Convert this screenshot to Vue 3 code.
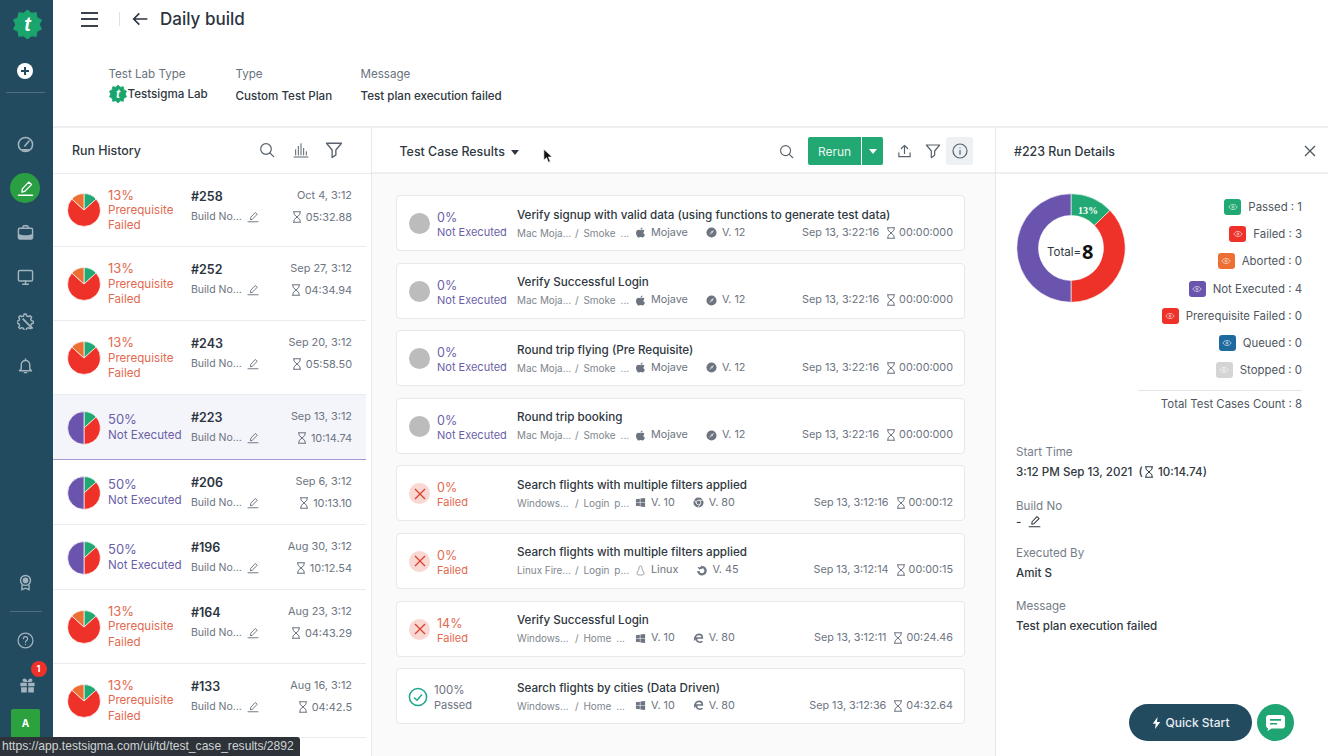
<script setup>
import { computed } from 'vue'

const GREEN = '#22a872'
const RED = '#ee3229'
const ORANGE = '#ee6f33'
const PURPLE = '#6a54ad'

// pie wedge as svg path, angles in degrees from 12 o'clock
function wedge(cx, cy, r, from, to) {
  const pt = (a) => {
    const t = (a - 90) * Math.PI / 180
    return (cx + r * Math.cos(t)).toFixed(2) + ' ' + (cy + r * Math.sin(t)).toFixed(2)
  }
  const large = to - from > 180 ? 1 : 0
  return `M${cx} ${cy}L${pt(from)}A${r} ${r} 0 ${large} 1 ${pt(to)}Z`
}

// same thing with a hole, for the donut
function ring(cx, cy, R, r, from, to) {
  const pt = (a, rad) => {
    const t = (a - 90) * Math.PI / 180
    return (cx + rad * Math.cos(t)).toFixed(2) + ' ' + (cy + rad * Math.sin(t)).toFixed(2)
  }
  const large = to - from > 180 ? 1 : 0
  return `M${pt(from, R)}A${R} ${R} 0 ${large} 1 ${pt(to, R)}L${pt(to, r)}A${r} ${r} 0 ${large} 0 ${pt(from, r)}Z`
}

const logoPoints = computed(() => {
  const pts = []
  for (let i = 0; i < 20; i++) {
    const a = (i * 18 - 90) * Math.PI / 180
    const rad = i % 2 ? 9.6 : 12
    pts.push((12 + rad * Math.cos(a)).toFixed(2) + ',' + (12 + rad * Math.sin(a)).toFixed(2))
  }
  return pts.join(' ')
})

const pies = {
  pre: [
    { d: wedge(17, 17, 16.4, 0, 48), c: GREEN },
    { d: wedge(17, 17, 16.4, 48, 312), c: RED },
    { d: wedge(17, 17, 16.4, 312, 360), c: ORANGE }
  ],
  not: [
    { d: wedge(17, 17, 16.4, 0, 48), c: GREEN },
    { d: wedge(17, 17, 16.4, 48, 180), c: RED },
    { d: wedge(17, 17, 16.4, 180, 360), c: PURPLE }
  ]
}

const runs = [
  { id: '#258', date: 'Oct 4, 3:12', dur: '05:32.88', kind: 'pre' },
  { id: '#252', date: 'Sep 27, 3:12', dur: '04:34.94', kind: 'pre' },
  { id: '#243', date: 'Sep 20, 3:12', dur: '05:58.50', kind: 'pre' },
  { id: '#223', date: 'Sep 13, 3:12', dur: '10:14.74', kind: 'not', active: true },
  { id: '#206', date: 'Sep 6, 3:12', dur: '10:13.10', kind: 'not' },
  { id: '#196', date: 'Aug 30, 3:12', dur: '10:12.54', kind: 'not' },
  { id: '#164', date: 'Aug 23, 3:12', dur: '04:43.29', kind: 'pre' },
  { id: '#133', date: 'Aug 16, 3:12', dur: '04:42.5', kind: 'pre' }
]

const mac = { env: 'Mac Moja...', suite: '/ Smoke ...', os: 'apple', osName: 'Mojave', br: 'safari', brName: 'V. 12', time: 'Sep 13, 3:22:16', dur: '00:00:000', state: 'none', pct: '0%', label: 'Not Executed' }

const cases = [
  { ...mac, title: 'Verify signup with valid data (using functions to generate test data)' },
  { ...mac, title: 'Verify Successful Login' },
  { ...mac, title: 'Round trip flying (Pre Requisite)' },
  { ...mac, title: 'Round trip booking' },
  { title: 'Search flights with multiple filters applied', env: 'Windows...', suite: '/ Login p...', os: 'windows', osName: 'V. 10', br: 'chrome', brName: 'V. 80', time: 'Sep 13, 3:12:16', dur: '00:00:12', state: 'fail', pct: '0%', label: 'Failed' },
  { title: 'Search flights with multiple filters applied', env: 'Linux Fire...', suite: '/ Login p...', os: 'linux', osName: 'Linux', br: 'firefox', brName: 'V. 45', time: 'Sep 13, 3:12:14', dur: '00:00:15', state: 'fail', pct: '0%', label: 'Failed' },
  { title: 'Verify Successful Login', env: 'Windows...', suite: '/ Home ...', os: 'windows', osName: 'V. 10', br: 'edge', brName: 'V. 80', time: 'Sep 13, 3:12:11', dur: '00:24.46', state: 'fail', pct: '14%', label: 'Failed' },
  { title: 'Search flights by cities (Data Driven)', env: 'Windows...', suite: '/ Home ...', os: 'windows', osName: 'V. 10', br: 'edge', brName: 'V. 80', time: 'Sep 13, 3:12:36', dur: '04:32.64', state: 'pass', pct: '100%', label: 'Passed' }
]

const legend = [
  { label: 'Passed : 1', c: GREEN },
  { label: 'Failed : 3', c: RED },
  { label: 'Aborted : 0', c: ORANGE },
  { label: 'Not Executed : 4', c: PURPLE },
  { label: 'Prerequisite Failed : 0', c: RED },
  { label: 'Queued : 0', c: '#1e6a9e' },
  { label: 'Stopped : 0', c: '#d4d4d4' }
]

const donut = [
  { d: ring(55, 55, 54.2, 32.5, 0, 46), c: GREEN },
  { d: ring(55, 55, 54.2, 32.5, 46, 180), c: RED },
  { d: ring(55, 55, 54.2, 32.5, 180, 360), c: PURPLE }
]

const railTop = ['dial', 'pencil', 'case', 'monitor', 'gear', 'bell']
</script>

<template>
  <div class="app">
    <svg class="sprite" aria-hidden="true">
      <symbol id="dial" viewBox="0 0 24 24"><g fill="none" stroke="currentColor" stroke-width="2.200"><circle cx="12" cy="12" r="10"/><path d="M11 14l6-7" stroke-linecap="round"/></g><path fill="currentColor" d="M5 18.500h14a10 10 0 0 1-14 0z"/></symbol>
      <symbol id="pencil" viewBox="0 0 24 24"><g fill="none" stroke="currentColor" stroke-width="1.900" stroke-linejoin="round" stroke-linecap="round"><path d="M7 17l.5-4.500L16.500 3l4 3.500L11 16z"/><path d="M2 21.500h20"/></g></symbol>
      <symbol id="case" viewBox="0 0 24 24"><g fill="none" stroke="currentColor" stroke-width="2"><path d="M8.500 6V4a1.500 1.500 0 0 1 1.500-1.500h4A1.500 1.500 0 0 1 15.500 4v2"/><rect x="2" y="6" width="20" height="15" rx="2"/></g><path fill="currentColor" d="M2 14c6 2.500 14 2.500 20 0v6a2 2 0 0 1-2 2H4a2 2 0 0 1-2-2z"/></symbol>
      <symbol id="monitor" viewBox="0 0 24 24"><g fill="none" stroke="currentColor" stroke-width="2" stroke-linecap="round"><rect x="2" y="2" width="20" height="15" rx="2"/><path d="M12 17v4M8 21.500h8"/></g></symbol>
      <symbol id="gear" viewBox="0 0 24 24"><path fill="none" stroke="currentColor" stroke-width="2" stroke-linejoin="round" d="M10 1.500h3l.7 2.700 2.500 1 2.400-1.400 2.100 2.100-1.400 2.400 1 2.500 2.700.7v3l-2.700.7-1 2.500 1.400 2.400-2.100 2.100-2.400-1.400-2.500 1-.7 2.700h-3l-.7-2.700-2.500-1-2.400 1.400-2.100-2.100 1.400-2.400-1-2.500-2.700-.7v-3l2.700-.7 1-2.500-1.400-2.400 2.100-2.100 2.400 1.400 2.500-1z"/><path fill="none" stroke="currentColor" stroke-width="2.600" d="M8 8l14 14"/></symbol>
      <symbol id="bell" viewBox="0 0 24 24"><g fill="none" stroke="currentColor" stroke-width="2" stroke-linejoin="round"><path d="M6 17v-6a6 6 0 0 1 12 0v6l2.500 2.500h-17z"/><path d="M9.500 22h5M12 5V2"/></g></symbol>
      <symbol id="badge" viewBox="0 0 24 24"><g fill="none" stroke="currentColor" stroke-width="2"><circle cx="12" cy="9" r="7"/><circle cx="12" cy="9" r="3" fill="currentColor"/><path d="M7 15v7l5-2 5 2v-7"/></g></symbol>
      <symbol id="help" viewBox="0 0 24 24"><g fill="none" stroke="currentColor" stroke-width="1.700" stroke-linecap="round"><circle cx="12" cy="12" r="10.500"/><path d="M9 9.500a3 3 0 1 1 4.500 2.600c-1 .6-1.500 1.100-1.500 2.400M12 17.500v.1"/></g></symbol>
      <symbol id="gift" viewBox="0 0 24 24"><path fill="currentColor" d="M2 8h9v5H2zM13 8h9v5h-9zM3 14.500h8V22H3zM13 14.500h8V22h-8zM7.500 2C10 2 11.500 4.500 12 7c.5-2.500 2-5 4.500-5a2.500 2.500 0 0 1 0 5h-9a2.500 2.500 0 0 1 0-5z"/></symbol>
      <symbol id="hourglass" viewBox="0 0 24 24"><g fill="none" stroke="currentColor" stroke-width="2" stroke-linejoin="round"><path d="M4 1.500h16M4 22.500h16M6 2v4.500l6 5.500 6-5.500V2M6 22v-4.500l6-5.500 6 5.500V22"/></g></symbol>
      <symbol id="search" viewBox="0 0 24 24"><g fill="none" stroke="currentColor" stroke-width="1.800" stroke-linecap="round"><circle cx="10.500" cy="10.500" r="8"/><path d="M16.500 16.500L22 22"/></g></symbol>
      <symbol id="bars" viewBox="0 0 24 24"><path fill="none" stroke="currentColor" stroke-width="1.500" d="M1 22.500h22M4 20v-9M8 20V6M12 20V2M16 20V9M20 20v-6"/></symbol>
      <symbol id="filter" viewBox="0 0 24 24"><path fill="none" stroke="currentColor" stroke-width="1.800" stroke-linejoin="round" d="M2 3h20l-7.500 9v6.500L9.500 22v-10z"/></symbol>
      <symbol id="upload" viewBox="0 0 24 24"><path fill="none" stroke="currentColor" stroke-width="1.900" stroke-linecap="round" stroke-linejoin="round" d="M12 16V3M7 8l5-5 5 5M3 15v6h18v-6"/></symbol>
      <symbol id="info" viewBox="0 0 24 24"><g fill="none" stroke="currentColor" stroke-width="1.800" stroke-linecap="round"><circle cx="12" cy="12" r="10.500"/><path d="M12 11v6M12 7.200v.1"/></g></symbol>
      <symbol id="eye" viewBox="0 0 24 24"><g fill="none" stroke="currentColor" stroke-width="2"><path d="M2 12c3-4.500 6-6 10-6s7 1.500 10 6c-3 4.500-6 6-10 6s-7-1.500-10-6z"/><circle cx="12" cy="12" r="2.500"/></g></symbol>
      <symbol id="apple" viewBox="0 0 24 24"><path fill="currentColor" d="M16.500 1c.2 2.500-2 5-4.500 4.800-.3-2.300 2-4.700 4.500-4.800zM12.200 7c1 0 2.400-1.200 4.300-1.200 1.500 0 3.300.8 4.400 2.500-3.600 2.200-3 7 .8 8.500-1 2.500-3 6.200-5.200 6.200-1.400 0-2.100-1-3.900-1s-2.600 1-4 1C5.700 23 2.200 17.500 2.200 13c0-4.600 3-7 5.700-7 1.800 0 3.300 1 4.300 1z"/></symbol>
      <symbol id="safari" viewBox="0 0 24 24"><circle cx="12" cy="12" r="11" fill="currentColor"/><path fill="#e8e8e8" d="M17.500 6.500L13.500 13.500 10.500 10.500z"/><path fill="#fff" opacity=".5" d="M6.500 17.500L10.500 10.500 13.500 13.500z"/></symbol>
      <symbol id="windows" viewBox="0 0 24 24"><path fill="currentColor" d="M2 5l8.500-1.300V11.500H2zM11.800 3.500L22 2v9.500H11.800zM2 12.800h8.500v7.500L2 19zM11.800 12.800H22V22l-10.200-1.500z"/></symbol>
      <symbol id="chrome" viewBox="0 0 24 24"><circle cx="12" cy="12" r="11" fill="currentColor"/><circle cx="12" cy="12" r="5" fill="currentColor" stroke="#fff" stroke-width="1.600"/><path fill="none" stroke="#fff" stroke-width="1.600" d="M12 7h10M7.700 14.500L3 6M16.300 14.500L11 23"/></symbol>
      <symbol id="linux" viewBox="0 0 24 24"><path fill="none" stroke="currentColor" stroke-width="1.500" stroke-linejoin="round" d="M12 2c2.500 0 3 2.500 3 5 0 3 5 8 4.500 12-.2 1.500-3 3-7.500 3s-7.300-1.500-7.500-3C4 15 9 10 9 7c0-2.500.5-5 3-5z"/></symbol>
      <symbol id="firefox" viewBox="0 0 24 24"><path fill="none" stroke="currentColor" stroke-width="5" d="M13 4.500a8 8 0 1 1-8 8.500"/><path fill="currentColor" d="M3 4l5 1.500L13 1v7l-6 2z"/></symbol>
      <symbol id="edge" viewBox="0 0 24 24"><path fill="none" stroke="currentColor" stroke-width="3.400" stroke-linecap="round" d="M4 15C3 8 7.500 3 13 3c4.500 0 7.500 3 7.500 8H6.500M7.500 11c0 6 3.500 9 7 9 2 0 3.500-.4 5-1.300"/></symbol>
    </svg>

    <aside class="rail">
      <svg class="rail-logo" viewBox="0 0 24 24">
        <polygon :points="logoPoints" fill="#1ba56e" stroke="#1ba56e" stroke-linejoin="round" />
        <text x="12" y="17" text-anchor="middle" class="logo-t">t</text>
      </svg>
      <div class="rail-add"></div>
      <div class="rail-line first"></div>
      <nav class="rail-nav">
        <div v-for="ic in railTop" :key="ic" class="rail-item" :class="{ on: ic === 'pencil' }">
          <svg class="rail-ic"><use :href="'#' + ic" /></svg>
        </div>
      </nav>
      <div class="rail-bottom">
        <svg class="rail-ic"><use href="#badge" /></svg>
        <div class="rail-line"></div>
        <svg class="rail-ic help"><use href="#help" /></svg>
        <div class="gift">
          <svg class="rail-ic"><use href="#gift" /></svg>
          <span class="gift-count">1</span>
        </div>
        <div class="avatar">A</div>
      </div>
    </aside>

    <main class="page">
      <header class="top">
        <div class="burger"><span></span><span></span><span></span></div>
        <div class="top-sep"></div>
        <svg class="back" viewBox="0 0 24 24"><path fill="none" stroke="#2b3440" stroke-width="2.400" d="M23 12H3M11 3.500L2.500 12l8.500 8.500" /></svg>
        <h1>Daily build</h1>
      </header>

      <div class="meta">
        <div class="meta-col lab">
          <div class="meta-label">Test Lab Type</div>
          <div class="meta-lab">
            <svg class="lab-logo" viewBox="0 0 24 24">
              <polygon :points="logoPoints" fill="#1ba56e" stroke="#1ba56e" stroke-linejoin="round" />
              <text x="12" y="17" text-anchor="middle" class="logo-t">t</text>
            </svg>
            Testsigma Lab
          </div>
        </div>
        <div class="meta-col type">
          <div class="meta-label">Type</div>
          <div class="meta-value">Custom Test Plan</div>
        </div>
        <div class="meta-col">
          <div class="meta-label">Message</div>
          <div class="meta-value">Test plan execution failed</div>
        </div>
      </div>

      <div class="panes">
        <section class="history">
          <div class="history-head">
            <span class="head-title">Run History</span>
            <div class="history-tools">
              <svg class="tool"><use href="#search" /></svg>
              <svg class="tool"><use href="#bars" /></svg>
              <svg class="tool big"><use href="#filter" /></svg>
            </div>
          </div>
          <div class="run-list">
            <div v-for="run in runs" :key="run.id" class="run" :class="{ active: run.active }">
              <svg class="pie" viewBox="0 0 34 34">
                <path v-for="(p, i) in pies[run.kind]" :key="i" :d="p.d" :fill="p.c" stroke="#fff" stroke-width="0.700" />
              </svg>
              <div class="run-state" :class="run.kind">
                <span class="pct">{{ run.kind === 'pre' ? '13%' : '50%' }}</span>
                <template v-if="run.kind === 'pre'">Prerequisite<br />Failed</template>
                <template v-else>Not Executed</template>
              </div>
              <div class="run-id">
                <div class="run-num">{{ run.id }}</div>
                <div class="run-build">Build No... <svg class="pen"><use href="#pencil" /></svg></div>
              </div>
              <div class="run-time">
                <div class="run-date">{{ run.date }}</div>
                <div class="run-dur"><svg class="glass"><use href="#hourglass" /></svg>{{ run.dur }}</div>
              </div>
            </div>
          </div>
        </section>

        <section class="results">
          <div class="results-head">
            <span class="head-title">Test Case Results</span>
            <span class="caret"></span>
            <svg class="tool search-ic"><use href="#search" /></svg>
            <div class="rerun">
              <button class="rerun-btn">Rerun</button>
              <button class="rerun-more"><span class="caret white"></span></button>
            </div>
            <svg class="tool up"><use href="#upload" /></svg>
            <svg class="tool fil"><use href="#filter" /></svg>
            <div class="info-btn"><svg class="tool"><use href="#info" /></svg></div>
            <svg class="cursor" viewBox="0 0 12 18"><path d="M1 1l0 13 3.200-3 2.300 5.500 2.300-1-2.300-5.300H11z" fill="#111" stroke="#fff" stroke-width="0.800" /></svg>
          </div>
          <div class="case-list">
            <div v-for="(c, i) in cases" :key="i" class="case">
              <div class="case-status" :class="c.state">
                <span v-if="c.state === 'none'" class="dot"></span>
                <span v-else-if="c.state === 'fail'" class="dot fail-dot">
                  <svg viewBox="0 0 12 12"><path d="M1 1l10 10M11 1L1 11" stroke="#d9402e" stroke-width="1.300" fill="none" /></svg>
                </span>
                <svg v-else class="ok" viewBox="0 0 20 20">
                  <circle cx="10" cy="10" r="8.600" fill="none" stroke="#1fa58a" stroke-width="1.500" />
                  <path d="M6 10.500l3 2.700 5-5.700" fill="none" stroke="#1fa58a" stroke-width="1.500" />
                </svg>
                <div class="case-pct"><span class="pct">{{ c.pct }}</span>{{ c.label }}</div>
              </div>
              <div class="case-main">
                <div class="case-title">{{ c.title }}</div>
                <div class="case-meta">
                  <span class="env">{{ c.env }}</span>
                  <span class="suite">{{ c.suite }}</span>
                  <svg class="os"><use :href="'#' + c.os" /></svg>
                  <span class="os-name">{{ c.osName }}</span>
                  <svg class="os"><use :href="'#' + c.br" /></svg>
                  <span class="br-name">{{ c.brName }}</span>
                  <span class="case-time">{{ c.time }}</span>
                  <svg class="glass"><use href="#hourglass" /></svg>
                  <span>{{ c.dur }}</span>
                </div>
              </div>
            </div>
          </div>
        </section>

        <section class="details">
          <div class="details-head">
            <span class="head-title">#223 Run Details</span>
            <svg class="close" viewBox="0 0 12 12"><path d="M1 1l10 10M11 1L1 11" stroke="#4c5560" stroke-width="1.300" fill="none" /></svg>
          </div>
          <div class="summary">
            <svg class="donut" viewBox="0 0 110 110">
              <path v-for="(p, i) in donut" :key="i" :d="p.d" :fill="p.c" stroke="#fff" stroke-width="0.600" />
              <text x="72" y="20.500" class="donut-pct">13%</text>
              <text x="31" y="63" class="donut-total">Total=</text>
              <text x="66" y="66" class="donut-num">8</text>
            </svg>
            <div class="legend">
              <div v-for="l in legend" :key="l.label" class="legend-row">
                <span class="legend-eye" :style="{ background: l.c }"><svg><use href="#eye" /></svg></span>
                {{ l.label }}
              </div>
              <div class="legend-total">Total Test Cases Count : 8</div>
            </div>
          </div>
          <dl class="facts">
            <dt>Start Time</dt>
            <dd class="start">3:12 PM Sep 13, 2021&nbsp; (<svg class="glass"><use href="#hourglass" /></svg> 10:14.74)</dd>
            <dt>Build No</dt>
            <dd class="tight">- &nbsp;<svg class="pen dark"><use href="#pencil" /></svg></dd>
            <dt>Executed By</dt>
            <dd>Amit S</dd>
            <dt>Message</dt>
            <dd>Test plan execution failed</dd>
          </dl>
        </section>
      </div>
    </main>

    <div class="float">
      <button class="quick">
        <svg viewBox="0 0 12 16"><path d="M7.500 0L1 9h4l-1 7 7-9.500H6.500z" fill="#fff" /></svg>
        Quick Start
      </button>
      <button class="chat">
        <svg viewBox="0 0 24 20"><path fill="#fff" d="M4 0h16a4 4 0 0 1 4 4v9a4 4 0 0 1-4 4H7l-5 3 .5-3.500A4 4 0 0 1 0 13V4a4 4 0 0 1 4-4z" /><path stroke="#1fa572" stroke-width="2" d="M5 6h14M5 11h9" /></svg>
      </button>
    </div>

    <div class="url-tip">https://app.testsigma.com/ui/td/test_case_results/2892</div>
  </div>
</template>

<style>
html, body {
  margin: 0;
  height: 756px;
  overflow: hidden;
  background: #fff;
}
</style>

<style scoped>
.app {
  display: flex;
  position: relative;
  width: 1328px;
  height: 756px;
  overflow: hidden;
  font-family: Inter, "Liberation Sans", sans-serif;
  font-size: 11.600px;
  color: #2f3741;
}
.sprite {
  position: absolute;
  width: 0;
  height: 0;
}

/* left rail */
.rail {
  width: 53px;
  flex: none;
  background: #234b60;
  display: flex;
  flex-direction: column;
  align-items: center;
  color: #a3b4be;
}
.rail-logo {
  width: 29px;
  height: 29px;
  margin: 10px 0 1px 1px;
}
.logo-t {
  font-family: "Liberation Sans", sans-serif;
  font-style: italic;
  font-weight: 700;
  font-size: 16px;
  fill: #fff;
}
.rail-add {
  width: 16px;
  height: 16px;
  margin-top: 23px;
  margin-left: -3px;
  border-radius: 50%;
  background: #fff;
  position: relative;
}
.rail-add::before,
.rail-add::after {
  content: "";
  position: absolute;
  background: #234b60;
}
.rail-add::before {
  left: 4px;
  top: 7px;
  width: 8px;
  height: 2px;
}
.rail-add::after {
  left: 7px;
  top: 4px;
  width: 2px;
  height: 8px;
}
.rail-line {
  width: 39px;
  height: 1px;
  background: #4f7082;
  margin: 0 0 0 -2px;
}
.rail-line.first {
  margin-top: 13px;
}
.rail-nav {
  margin-top: 36px;
  display: flex;
  flex-direction: column;
}
.rail-item {
  width: 30px;
  height: 30px;
  margin: 0 0 14.400px -3px;
  border-radius: 50%;
  display: flex;
  align-items: center;
  justify-content: center;
}
.rail-item.on {
  background: #2a9e42;
  color: #fff;
}
.rail-ic {
  width: 17px;
  height: 17px;
}
.rail-bottom {
  margin-top: auto;
  display: flex;
  flex-direction: column;
  align-items: center;
  height: 182px;
}
.rail-bottom > .rail-ic:first-child {
  margin-left: -3px;
}
.rail-bottom .rail-line {
  margin-top: 20px;
  width: 32px;
}
.rail-ic.help {
  margin: 20px 0 0 -3px;
}
.gift {
  position: relative;
  margin-top: 28px;
  margin-left: 1px;
  height: 17px;
}
.gift-count {
  position: absolute;
  left: 12px;
  top: -16px;
  width: 16px;
  height: 16px;
  border-radius: 50%;
  background: #ee3229;
  color: #fff;
  font-size: 9px;
  font-weight: 700;
  line-height: 16px;
  text-align: center;
}
.avatar {
  width: 29px;
  height: 29px;
  margin: 15px 0 0 -2px;
  background: #2ca23f;
  border-radius: 2px;
  color: #fff;
  font-size: 10px;
  font-weight: 700;
  line-height: 29px;
  text-align: center;
}

/* page */
.page {
  flex: 1;
  min-width: 0;
  display: flex;
  flex-direction: column;
}
.top {
  height: 38px;
  display: flex;
  align-items: center;
  padding-left: 28px;
}
.burger {
  width: 17px;
  display: flex;
  flex-direction: column;
  gap: 4.500px;
}
.burger span {
  height: 2px;
  background: #3a424b;
}
.top-sep {
  width: 1px;
  height: 14px;
  margin-left: 21px;
  background: #dfe2e5;
}
.back {
  width: 16px;
  height: 16px;
  margin-left: 12px;
}
h1 {
  margin: 0 0 0 12px;
  font-size: 17px;
  font-weight: 500;
  color: #2b3440;
}
.meta {
  height: 90px;
  box-sizing: border-box;
  display: flex;
  padding: 28px 0 0 55.500px;
  border-bottom: 2px solid #eceef0;
}
.meta-col {
  display: flex;
  flex-direction: column;
}
.meta-col.lab {
  width: 127px;
}
.meta-col.type {
  width: 125px;
}
.meta-label {
  color: #69727c;
  line-height: 16px;
}
.meta-value {
  margin-top: 6px;
  line-height: 16px;
  font-weight: 500;
  color: #2f3741;
}
.meta-lab {
  display: flex;
  align-items: center;
  margin-top: 3px;
  line-height: 18px;
  font-weight: 500;
}
.lab-logo {
  width: 18px;
  height: 18px;
  margin-right: 1px;
}
.panes {
  flex: 1;
  min-height: 0;
  display: flex;
}
.head-title {
  font-size: 12.400px;
  font-weight: 500;
  color: #2f3741;
}
.tool {
  width: 16px;
  height: 16px;
  color: #59626c;
}

/* run history */
.history {
  width: 318px;
  flex: none;
  border-right: 1px solid #e6e8eb;
}
.history-head {
  height: 45.500px;
  box-sizing: border-box;
  display: flex;
  align-items: center;
  padding: 0 28px 0 19px;
  border-bottom: 1px solid #e9ebee;
}
.history-tools {
  margin-left: auto;
  display: flex;
  align-items: center;
  gap: 18px;
}
.tool.big {
  width: 18px;
  height: 18px;
  margin-left: -2px;
}
.run-list {
  width: 313px;
}
.run {
  display: flex;
  align-items: center;
  box-sizing: border-box;
  padding: 14px 14px 13px 14px;
  border-bottom: 1px solid #e9ebee;
}
.run.active {
  background: #f4f5fb;
  border-bottom-color: #a39ad2;
}
.pie {
  width: 34px;
  height: 34px;
  flex: none;
}
.run-state {
  width: 83px;
  margin-left: 7px;
  font-size: 11.600px;
  line-height: 15.300px;
  flex: none;
  white-space: nowrap;
}
.pct {
  display: block;
  font-size: 13px;
}
.run-state.pre {
  color: #e2694f;
}
.run-state.not {
  color: #6a5fa8;
}
.run-id {
  align-self: flex-start;
  height: 37px;
  flex: none;
}
.run-num {
  font-size: 12.500px;
  font-weight: 600;
  line-height: 18px;
  color: #2b3440;
}
.run-build {
  margin-top: 3px;
  font-size: 10.500px;
  line-height: 16px;
  color: #6c7480;
  white-space: nowrap;
  display: flex;
  align-items: center;
  gap: 5px;
}
.pen {
  width: 12px;
  height: 12px;
  color: #6c7480;
}
.pen.dark {
  color: #2f3741;
  width: 13px;
  height: 13px;
  vertical-align: -2px;
}
.run-time {
  align-self: flex-start;
  margin-left: auto;
  font-size: 10.900px;
  text-align: right;
  color: #6c7480;
}
.run-date {
  margin-top: -1px;
  line-height: 16px;
}
.run-dur {
  margin-top: 6px;
  line-height: 16px;
  display: flex;
  align-items: center;
  justify-content: flex-end;
  gap: 3px;
}
.glass {
  width: 12px;
  height: 12px;
  flex: none;
}

/* test case results */
.results {
  width: 624px;
  flex: none;
  display: flex;
  flex-direction: column;
  background: #fafafa;
  border-right: 1px solid #e6e8eb;
  box-sizing: border-box;
}
.results-head {
  height: 46px;
  flex: none;
  box-sizing: border-box;
  display: flex;
  align-items: center;
  position: relative;
  padding: 2px 22px 0 27.500px;
  background: #fff;
  border-bottom: 2px solid #eceef0;
}
.caret {
  width: 0;
  height: 0;
  margin: 2px 0 0 6px;
  border-left: 4.500px solid transparent;
  border-right: 4.500px solid transparent;
  border-top: 5px solid #2f3741;
}
.caret.white {
  margin: 0;
  border-top-color: #fff;
}
.search-ic {
  margin-left: auto;
  width: 15px;
  height: 15px;
}
.rerun {
  display: flex;
  height: 28px;
  margin-left: 14px;
}
.rerun-btn,
.rerun-more {
  border: 0;
  padding: 0;
  background: #22a872;
  color: #e8f6f0;
  font: inherit;
  font-size: 12px;
  border-radius: 2px 0 0 2px;
}
.rerun-btn {
  width: 53px;
}
.rerun-more {
  width: 21px;
  margin-left: 1px;
  border-radius: 0 2px 2px 0;
  display: flex;
  align-items: center;
  justify-content: center;
}
.up {
  margin-left: 14px;
  width: 15px;
}
.fil {
  margin-left: 13px;
}
.info-btn {
  width: 27px;
  height: 28px;
  margin-left: 5px;
  background: #eef1f4;
  border-radius: 3px;
  display: flex;
  align-items: center;
  justify-content: center;
}
.cursor {
  position: absolute;
  left: 171px;
  top: 20px;
  width: 10px;
  height: 16px;
}
.case-list {
  padding: 21px 30px 0 24px;
  display: flex;
  flex-direction: column;
  gap: 11.600px;
}
.case {
  height: 56px;
  box-sizing: border-box;
  display: flex;
  align-items: center;
  background: #fff;
  border: 1px solid #e6e8eb;
  border-radius: 4px;
  padding: 1px 11px 0;
}
.case-status {
  width: 109px;
  flex: none;
  display: flex;
  align-items: center;
  gap: 7px;
}
.dot {
  width: 21px;
  height: 21px;
  margin-left: 1px;
  border-radius: 50%;
  background: #bcbcbc;
  flex: none;
  display: flex;
  align-items: center;
  justify-content: center;
}
.fail-dot {
  background: #f9d7d2;
}
.fail-dot svg {
  width: 12px;
  height: 12px;
}
.ok {
  width: 20px;
  height: 20px;
  flex: none;
}
.pass {
  gap: 6px;
}
.case-pct {
  font-size: 11px;
  line-height: 15px;
  padding-top: 3px;
  white-space: nowrap;
}
.case-pct .pct {
  font-size: 12.500px;
}
.pass .case-pct .pct {
  font-size: 11.500px;
}
.none .case-pct {
  color: #6a5fa8;
}
.fail .case-pct {
  color: #e2694f;
}
.pass .case-pct {
  color: #6c7480;
}
.case-main {
  flex: 1;
  min-width: 0;
}
.case-title {
  font-size: 11.650px;
  font-weight: 500;
  line-height: 18px;
  color: #2f3741;
  white-space: nowrap;
}
.case-meta {
  display: flex;
  align-items: center;
  font-size: 10.800px;
  line-height: 18px;
  color: #6c7480;
  white-space: nowrap;
}
.env {
  width: 58px;
  flex: none;
  overflow: hidden;
  font-size: 9.900px;
  color: #80868e;
}
.suite {
  width: 60px;
  flex: none;
  font-size: 10px;
  word-spacing: 2px;
  color: #80868e;
}
.os {
  width: 11px;
  height: 11px;
  flex: none;
  margin-right: 5px;
}
.os-name {
  margin-right: 18px;
}
.case-time {
  margin-left: auto;
  margin-right: 6px;
}
.case-meta .glass {
  margin-right: 2px;
}

/* run details */
.details {
  flex: 1;
  min-width: 0;
}
.details-head {
  height: 46px;
  box-sizing: border-box;
  display: flex;
  align-items: center;
  justify-content: space-between;
  padding: 2px 12px 0 18px;
  border-bottom: 2px solid #eceef0;
}
.close {
  width: 12px;
  height: 12px;
}
.summary {
  display: flex;
  padding: 19px 26px 0 20px;
}
.donut {
  width: 110px;
  height: 110px;
  flex: none;
}
.donut-pct {
  font-family: "Liberation Serif", serif;
  font-weight: 700;
  font-size: 10px;
  fill: #fff;
  text-anchor: middle;
}
.donut-total {
  font-size: 11.500px;
  font-family: Inter, sans-serif;
  fill: #2f3741;
}
.donut-num {
  font-family: "Open Sans", sans-serif;
  font-weight: 700;
  font-size: 20px;
  fill: #111;
}
.legend {
  flex: 1;
  display: flex;
  flex-direction: column;
  align-items: flex-end;
  font-size: 11.400px;
}
.legend-row {
  display: flex;
  align-items: center;
  gap: 7px;
  height: 27.300px;
  color: #4e5660;
}
.legend-eye {
  width: 17px;
  height: 16px;
  border-radius: 3px;
  display: flex;
  align-items: center;
  justify-content: center;
  color: rgba(255, 255, 255, 0.7);
}
.legend-eye svg {
  width: 10px;
  height: 10px;
}
.legend-total {
  width: 164px;
  margin-top: 6px;
  padding-top: 6px;
  border-top: 1px solid #e2e4e7;
  text-align: right;
  line-height: 15px;
  color: #4e5660;
}
.facts {
  margin: 32px 0 0 20px;
}
.facts dt {
  color: #757d87;
  line-height: 16px;
}
.facts dd {
  margin: 4px 0 17px;
  line-height: 16px;
  font-weight: 500;
  color: #2f3741;
}
.facts dd.start {
  margin-bottom: 18px;
}
.facts dd.tight {
  margin: 0 0 15px;
}
.facts .glass {
  vertical-align: -2px;
}

/* floating */
.float {
  position: absolute;
  left: 1129px;
  top: 704px;
  display: flex;
  align-items: center;
  gap: 5px;
}
.quick {
  width: 123px;
  height: 37px;
  border: 0;
  border-radius: 19px;
  background: #234b60;
  color: #e8eef1;
  font: inherit;
  font-size: 12px;
  font-weight: 500;
  display: flex;
  align-items: center;
  justify-content: center;
  gap: 5px;
}
.quick svg {
  width: 9px;
  height: 12px;
}
.chat {
  width: 37px;
  height: 37px;
  border: 0;
  border-radius: 50%;
  background: #1fa572;
  display: flex;
  align-items: center;
  justify-content: center;
  padding: 0;
}
.chat svg {
  width: 19px;
  height: 16px;
}
.url-tip {
  position: absolute;
  left: 0;
  bottom: 0;
  width: 300px;
  height: 19px;
  box-sizing: border-box;
  padding-left: 2px;
  background: #2d3338;
  border-top-right-radius: 3px;
  color: #cfd3d6;
  font-family: "Liberation Sans", sans-serif;
  font-size: 12.100px;
  line-height: 19px;
  white-space: nowrap;
}
</style>
